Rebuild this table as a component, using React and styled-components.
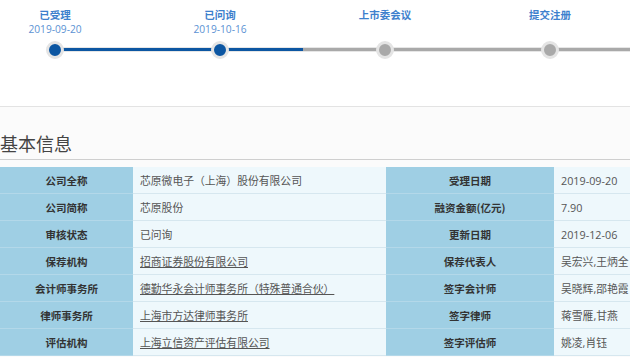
import React from "react";
import styled, { createGlobalStyle } from "styled-components";

const GlobalStyle = createGlobalStyle`
    html, body {
        margin: 0;
        padding: 0;
        background: #fff;
        overflow: hidden;
    }
    body {
        font-family: "Open Sans", "Noto Sans CJK SC", sans-serif;
        font-size: 10.5px;
    }
`;

const Page = styled.div`
    width: 630px;
    height: 357px;
    overflow: hidden;
    background: #fbfbfb;
`;

const Progress = styled.div`
    position: relative;
    height: 106px;
    background: #fff;
    border-bottom: 1px solid #e3e3e3;
    overflow: hidden;
`;

const Track = styled.div`
    position: absolute;
    top: 48px;
    left: 55px;
    right: 0;
    height: 3px;
    background: #a9a9a9;
    box-shadow: 0 0 0 1px #e6e6e6;
`;

const Fill = styled.div`
    height: 100%;
    background: #0c56a2;
`;

const Steps = styled.div`
    position: relative;
    display: flex;
    gap: 55px;
    padding-top: 7px;
`;

const Step = styled.div`
    width: 110px;
    flex: none;
    display: flex;
    flex-direction: column;
    align-items: center;
`;

const StepName = styled.div`
    font-family: "Noto Sans CJK SC", sans-serif;
    font-weight: bold;
    font-size: 10.5px;
    line-height: 15px;
    color: #3d80cd;
`;

const StepDate = styled.div`
    height: 14px;
    line-height: 14px;
    font-size: 10.2px;
    color: #5b92d3;
`;

const Dot = styled.div`
    margin-top: 5px;
    width: 12px;
    height: 12px;
    border-radius: 50%;
    background: ${p => (p.$done ? "#0c56a2" : "#a9a9a9")};
    border: 3px solid #e4e4e4;
`;

const Title = styled.h2`
    margin: 22px 0 0;
    padding-bottom: 2px;
    font-family: "Noto Sans CJK SC", sans-serif;
    font-weight: normal;
    font-size: 18px;
    line-height: 28px;
    color: #444;
    border-bottom: 1px solid #cfcfcf;
`;

const Table = styled.table`
    margin-top: 7px;
    width: 700px;
    table-layout: fixed;
    border-collapse: collapse;
`;

const Label = styled.td`
    height: 26px;
    padding: 0;
    background: #9fcfe4;
    border-bottom: 1px solid #b3d8e9;
    text-align: center;
    font-family: "Noto Sans CJK SC", sans-serif;
    font-weight: bold;
    color: #333;
    white-space: nowrap;
`;

const Value = styled.td`
    height: 26px;
    padding: 0 0 0 7px;
    background: #eef8fc;
    border-bottom: 1px solid #d6e7ef;
    color: #555;
    font-size: 10.8px;
    white-space: nowrap;
    overflow: hidden;
`;

const Link = styled.a`
    color: #555;
    text-decoration: underline;
`;

const steps = [
    { name: "已受理", date: "2019-09-20", done: true },
    { name: "已问询", date: "2019-10-16", done: true },
    { name: "上市委会议", date: "", done: false },
    { name: "提交注册", date: "", done: false },
];

const rows = [
    ["公司全称", "芯原微电子（上海）股份有限公司", false, "受理日期", "2019-09-20"],
    ["公司简称", "芯原股份", false, "融资金额(亿元)", "7.90"],
    ["审核状态", "已问询", false, "更新日期", "2019-12-06"],
    ["保荐机构", "招商证券股份有限公司", true, "保荐代表人", "吴宏兴,王炳全"],
    ["会计师事务所", "德勤华永会计师事务所（特殊普通合伙）", true, "签字会计师", "吴晓辉,邵艳霞"],
    ["律师事务所", "上海市方达律师事务所", true, "签字律师", "蒋雪雁,甘燕"],
    ["评估机构", "上海立信资产评估有限公司", true, "签字评估师", "姚凌,肖钰"],
];

export default function App() {
    return (
        <Page>
            <GlobalStyle />
            <Progress>
                <Track>
                    <Fill style={{ width: 248 }} />
                </Track>
                <Steps>
                    {steps.map(s => (
                        <Step key={s.name}>
                            <StepName>{s.name}</StepName>
                            <StepDate>{s.date}</StepDate>
                            <Dot $done={s.done} />
                        </Step>
                    ))}
                </Steps>
            </Progress>

            <Title>基本信息</Title>

            <Table>
                <colgroup>
                    <col style={{ width: 133 }} />
                    <col style={{ width: 253 }} />
                    <col style={{ width: 168 }} />
                    <col />
                </colgroup>
                <tbody>
                    {rows.map(r => (
                        <tr key={r[0]}>
                            <Label>{r[0]}</Label>
                            <Value>{r[2] ? <Link>{r[1]}</Link> : r[1]}</Value>
                            <Label>{r[3]}</Label>
                            <Value>{r[4]}</Value>
                        </tr>
                    ))}
                </tbody>
            </Table>
        </Page>
    );
}
